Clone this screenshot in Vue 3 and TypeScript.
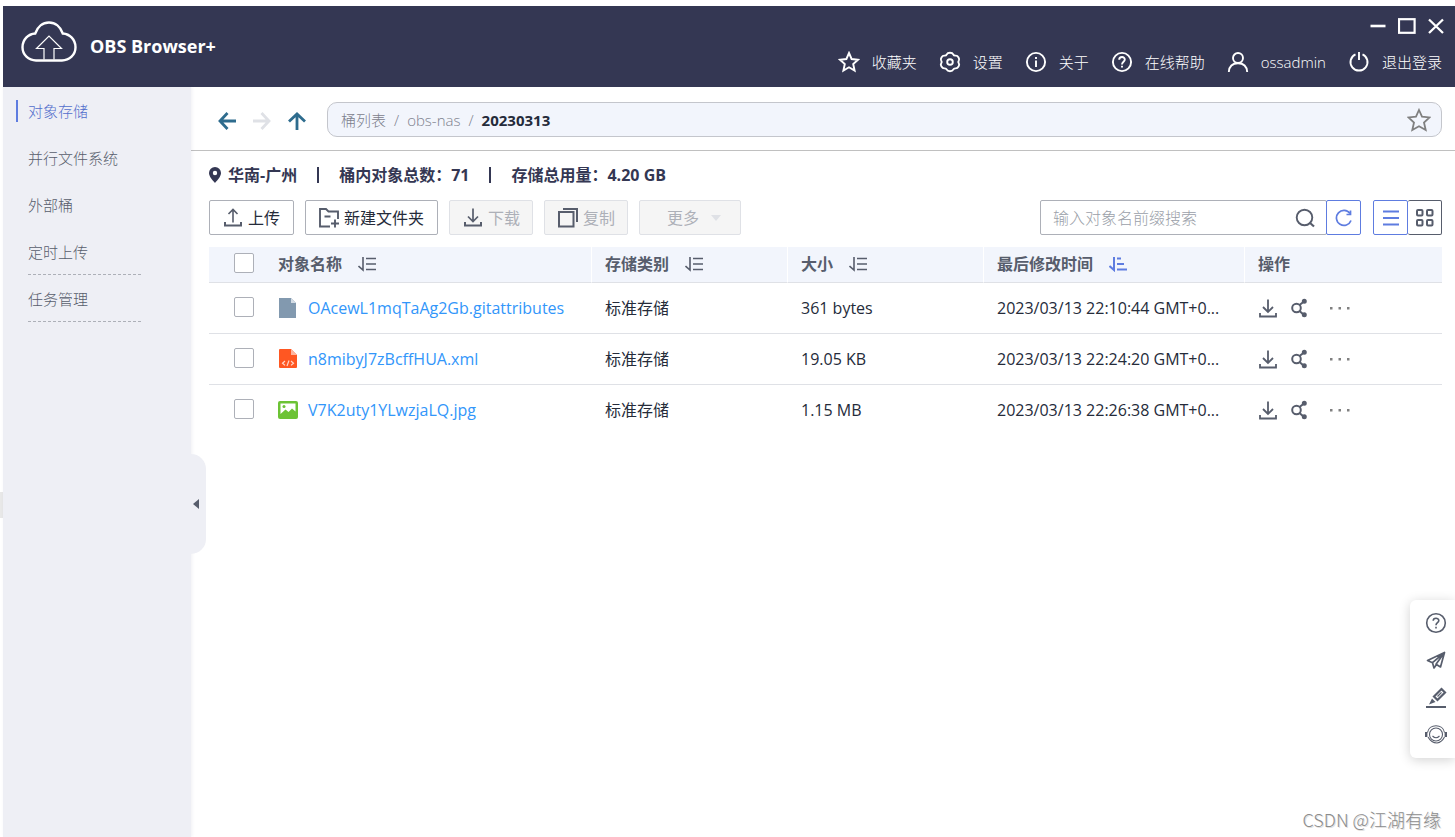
<script setup lang="ts">
import { ref } from 'vue'

interface StoredObject {
  name: string
  kind: 'file' | 'xml' | 'image'
  storageClass: string
  size: string
  modified: string
}

const headerLinks = [
  { icon: 'star', label: '收藏夹' },
  { icon: 'gear', label: '设置' },
  { icon: 'info', label: '关于' },
  { icon: 'help', label: '在线帮助' },
  { icon: 'user', label: 'ossadmin' },
  { icon: 'power', label: '退出登录' },
]

const menu = [
  { label: '对象存储', active: true, divided: false },
  { label: '并行文件系统', active: false, divided: false },
  { label: '外部桶', active: false, divided: false },
  { label: '定时上传', active: false, divided: true },
  { label: '任务管理', active: false, divided: true },
]

const columns = [
  { label: '对象名称', sortable: true, sorted: false },
  { label: '存储类别', sortable: true, sorted: false },
  { label: '大小', sortable: true, sorted: false },
  { label: '最后修改时间', sortable: true, sorted: true },
  { label: '操作', sortable: false, sorted: false },
]

const objects: StoredObject[] = [
  { name: 'OAcewL1mqTaAg2Gb.gitattributes', kind: 'file', storageClass: '标准存储', size: '361 bytes', modified: '2023/03/13 22:10:44 GMT+0...' },
  { name: 'n8mibyJ7zBcffHUA.xml', kind: 'xml', storageClass: '标准存储', size: '19.05 KB', modified: '2023/03/13 22:24:20 GMT+0...' },
  { name: 'V7K2uty1YLwzjaLQ.jpg', kind: 'image', storageClass: '标准存储', size: '1.15 MB', modified: '2023/03/13 22:26:38 GMT+0...' },
]

const keyword = ref('')
const selected = ref<string[]>([])
</script>

<template>
  <div class="app">
    <header class="header">
      <div class="brand">
        <svg class="logo" viewBox="0 0 56 42" width="56" height="42" fill="none" stroke="#fff">
          <path d="M15 39.500C7.500 39.500 1.500 33.800 1.500 26.300C1.500 18.600 7.200 13 14.200 12.500C16.500 5.800 21.800 1.500 28 1.500C34.200 1.500 39.500 5.800 41.800 12.500C48.800 13 54.500 18.600 54.500 26.300C54.500 33.800 48.500 39.500 41 39.500Z" stroke-width="2.400" />
          <path d="M23 38.500V27.500H15.500L28 15L40.500 27.500H33V38.500" stroke-width="1.200" />
        </svg>
        <span class="brand-name">OBS Browser+</span>
      </div>
      <div class="header-right">
        <div class="window-controls">
          <button type="button" aria-label="最小化">
            <svg viewBox="0 0 18 18" width="18" height="18" stroke="#fff" stroke-width="2.600"><path d="M1.500 9H16.500" /></svg>
          </button>
          <button type="button" aria-label="最大化">
            <svg viewBox="0 0 18 18" width="18" height="18" fill="none" stroke="#fff" stroke-width="2.200"><rect x="1" y="2.200" width="15.600" height="13.600" /></svg>
          </button>
          <button type="button" aria-label="关闭">
            <svg viewBox="0 0 18 18" width="18" height="18" stroke="#fff" stroke-width="2.300"><path d="M2 2.500L16 16M16 2.500L2 16" /></svg>
          </button>
        </div>
        <nav class="header-links">
          <a v-for="link in headerLinks" :key="link.icon" href="#">
            <svg viewBox="0 0 22 22" width="22" height="22" fill="none" stroke="#fff" stroke-width="1.900">
              <path v-if="link.icon === 'star'" d="M11 2L13.600 8L20 8.700L15.200 13L16.600 19.600L11 16.300L5.400 19.600L6.800 13L2 8.700L8.400 8Z" />
              <template v-else-if="link.icon === 'gear'">
                <path d="M7.800 3.300C8.700 1.300 13.300 1.300 14.200 3.300C14.800 4.600 15.500 4.800 16.700 4.600C18.900 4.400 21 8 19.800 9.600C19 10.600 19 11.400 19.800 12.400C21 14 18.900 17.600 16.700 17.400C15.500 17.200 14.800 17.400 14.200 18.700C13.300 20.700 8.700 20.700 7.800 18.700C7.200 17.400 6.500 17.200 5.300 17.400C3.100 17.600 1 14 2.200 12.400C3 11.400 3 10.600 2.200 9.600C1 8 3.100 4.400 5.300 4.600C6.500 4.800 7.200 4.600 7.800 3.300Z" />
                <circle cx="11" cy="11" r="2.800" />
              </template>
              <template v-else-if="link.icon === 'info'">
                <circle cx="11" cy="11" r="9.100" />
                <path d="M11 9.500V16" />
                <path d="M11 6V8" />
              </template>
              <template v-else-if="link.icon === 'help'">
                <circle cx="11" cy="11" r="9.100" />
                <path d="M8.200 8.800C8.200 5 13.900 5.200 13.800 8.600C13.800 10.700 11 10.800 11 13.400M11 14.700V16.600" />
              </template>
              <template v-else-if="link.icon === 'user'">
                <circle cx="11" cy="7" r="5" />
                <path d="M1.800 21C2.200 15.500 5.500 12.300 11 12.300S19.800 15.500 20.200 21" />
              </template>
              <path v-else d="M7.500 3.300A8.500 8.500 0 1 0 14.500 3.300M11 1V9" />
            </svg>
            <span>{{ link.label }}</span>
          </a>
        </nav>
      </div>
    </header>

    <div class="body">
      <aside class="sidebar">
        <ul>
          <li v-for="item in menu" :key="item.label" :class="{ divided: item.divided }">
            <a href="#" :class="{ active: item.active }">{{ item.label }}</a>
          </li>
        </ul>
        <button class="collapse" type="button" aria-label="收起菜单">
          <svg viewBox="0 0 6 10" width="6" height="10" fill="#575d6c"><path d="M6 0V10L0 5Z" /></svg>
        </button>
      </aside>

      <main class="main">
        <div class="navbar">
          <div class="arrows">
            <button type="button" aria-label="后退">
              <svg viewBox="0 0 18 18" width="18" height="18" fill="none" stroke="#2e6c8e" stroke-width="2.800"><path d="M18 9H2M9.500 1L2 9L9.500 17" /></svg>
            </button>
            <button type="button" aria-label="前进" disabled>
              <svg viewBox="0 0 18 18" width="18" height="18" fill="none" stroke="#dfe1e6" stroke-width="2.800"><path d="M0 9H16M8.500 1L16 9L8.500 17" /></svg>
            </button>
            <button type="button" aria-label="上一级">
              <svg viewBox="0 0 18 18" width="18" height="18" fill="none" stroke="#2e6c8e" stroke-width="2.800"><path d="M9 18V2M1 9.500L9 2L17 9.500" /></svg>
            </button>
          </div>
          <div class="path">
            <nav class="crumbs">
              <a href="#">桶列表</a><i>/</i><a href="#">obs-nas</a><i>/</i><b>20230313</b>
            </nav>
            <button type="button" aria-label="收藏">
              <svg viewBox="0 0 24 24" width="24" height="24" fill="none" stroke="#808080" stroke-width="1.800"><path d="M12 2L15 8.700L22.500 9.400L17 14.500L18.700 22L12 18.300L5.300 22L7 14.500L1.500 9.400L9 8.700Z" /></svg>
            </button>
          </div>
        </div>

        <section class="content">
          <div class="stats">
            <svg viewBox="0 0 12 16" width="12" height="16" fill="#343753" fill-rule="evenodd"><path d="M6 0A6 6 0 0 1 12 6C12 9.500 8.500 13 6 16C3.500 13 0 9.500 0 6A6 6 0 0 1 6 0ZM6 3.800A2.200 2.200 0 1 0 6 8.200A2.200 2.200 0 1 0 6 3.800Z" /></svg>
            <span>华南-广州</span>
            <i></i>
            <span>桶内对象总数：71</span>
            <i></i>
            <span>存储总用量：4.20 GB</span>
          </div>

          <div class="toolbar">
            <button class="btn" type="button">
              <svg viewBox="0 0 20 20" width="20" height="20" fill="none" stroke="#575d6c" stroke-width="2"><path d="M2 14V17.500H18V14" /><path d="M10 14.500V1.500M5.500 6L10 1.500L14.500 6" stroke-width="1.600" /></svg>
              <span>上传</span>
            </button>
            <button class="btn" type="button">
              <svg viewBox="0 0 20 20" width="20" height="20" fill="none" stroke="#575d6c" stroke-width="1.900"><path d="M11 18.500H1V1H7L9.500 3.500H19V11M5.500 8.500H11.500M12 15.500H20M16 11.500V19.500" /></svg>
              <span>新建文件夹</span>
            </button>
            <button class="btn" type="button" disabled>
              <svg viewBox="0 0 20 20" width="20" height="20" fill="none" stroke="#575d6c" stroke-width="2"><path d="M2 14V17.500H18V14" /><path d="M10 0.500V13.500M5 8.500L10 13.500L15 8.500" stroke-width="1.700" /></svg>
              <span>下载</span>
            </button>
            <button class="btn" type="button" disabled>
              <svg viewBox="0 0 20 20" width="20" height="20" fill="none" stroke="#575d6c" stroke-width="2"><path d="M1 4H15.500V18.500H1ZM5 1H19V14" /></svg>
              <span>复制</span>
            </button>
            <button class="btn more" type="button" aria-haspopup="menu" disabled>
              <span>更多</span>
              <svg viewBox="0 0 10 6" width="10" height="6" fill="#dfe1e6"><path d="M0 0H10L5 6Z" /></svg>
            </button>

            <form class="search" @submit.prevent>
              <input v-model="keyword" type="text" aria-label="搜索对象" placeholder="输入对象名前缀搜索" />
              <button type="submit" aria-label="搜索">
                <svg viewBox="0 0 20 20" width="20" height="20" fill="none" stroke="#575d6c" stroke-width="1.900"><circle cx="9.500" cy="9.500" r="7.800" /><path d="M14.500 14.500L19 18.500" stroke-width="2.200" /></svg>
              </button>
            </form>
            <button class="square blue refresh" type="button" aria-label="刷新">
              <svg viewBox="0 0 18 18" width="18" height="18" fill="none" stroke="#5e7ce0" stroke-width="1.700"><path d="M15 4.500A7.500 7.500 0 1 0 16 11.500" /><path d="M15.500 1.500V5.500H11.500" /></svg>
            </button>
            <div class="views">
              <button class="square blue" type="button" aria-label="列表视图">
                <svg viewBox="0 0 16 16" width="16" height="16" stroke="#5e7ce0" stroke-width="1.800"><path d="M0 1.500H16M0 8H16M0 14.500H16" /></svg>
              </button>
              <button class="square dark" type="button" aria-label="网格视图">
                <svg viewBox="0 0 18 18" width="18" height="18" fill="none" stroke="#575d6c" stroke-width="2"><rect x="1" y="1" width="5.500" height="5.500" rx="1" /><rect x="11" y="1" width="5.500" height="5.500" rx="1" /><rect x="1" y="11" width="5.500" height="5.500" rx="1" /><rect x="11" y="11" width="5.500" height="5.500" rx="1" /></svg>
              </button>
            </div>
          </div>

          <table class="objects">
            <colgroup>
              <col class="c-check" /><col /><col class="c-mid" /><col class="c-mid" /><col class="c-time" /><col class="c-ops" />
            </colgroup>
            <thead>
              <tr>
                <th class="check"><input type="checkbox" aria-label="全选" /></th>
                <th v-for="col in columns" :key="col.label">
                  <div class="th">
                    <span>{{ col.label }}</span>
                    <button v-if="col.sortable" type="button" :aria-label="col.label + ' 排序'">
                      <svg v-if="col.sorted" viewBox="0 0 18 16" width="18" height="16" fill="none" stroke="#5e7ce0" stroke-width="2"><path d="M5 1V14L0.500 10" /><path d="M8 2.500H12M8 8H15M8 13.500H18" /></svg>
                      <svg v-else viewBox="0 0 18 16" width="18" height="16" fill="none" stroke="#575d6c" stroke-width="1.600"><path d="M5 1V14L0.500 10" /><path d="M8 2.500H18M8 8H18M8 13.500H18" /></svg>
                    </button>
                  </div>
                </th>
              </tr>
            </thead>
            <tbody>
              <tr v-for="obj in objects" :key="obj.name">
                <td class="check"><input v-model="selected" type="checkbox" :value="obj.name" :aria-label="obj.name" /></td>
                <td>
                  <a class="name" href="#">
                    <svg v-if="obj.kind === 'file'" viewBox="0 0 20 20" width="20" height="20"><path d="M1 0H13L18 5V20H1Z" fill="#8299af" /><path d="M13 0V5H18Z" fill="#d3dce5" /></svg>
                    <svg v-else-if="obj.kind === 'xml'" viewBox="0 0 20 20" width="20" height="20"><path d="M2 0H13L19 6V18Q19 19 18 19H2Q1 19 1 18V1Q1 0 2 0Z" fill="#ff5722" /><path d="M13 0V6H19Z" fill="#ffb59e" /><path d="M7 12L4.500 14.200L7 16.400M13 12L15.500 14.200L13 16.400M11 11.500L9 17" fill="none" stroke="#ffd5c8" stroke-width="1.200" /></svg>
                    <svg v-else viewBox="0 0 20 20" width="20" height="20"><rect y="1" width="20" height="18" rx="2" fill="#6cc335" /><path d="M2.500 3.500H17.500V11.500L14 8.500L10.500 12L7.500 9.500L2.500 14Z" fill="#fff" /><circle cx="6" cy="6.500" r="1.500" fill="#6cc335" /></svg>
                    <span>{{ obj.name }}</span>
                  </a>
                </td>
                <td>{{ obj.storageClass }}</td>
                <td>{{ obj.size }}</td>
                <td>{{ obj.modified }}</td>
                <td>
                  <div class="ops">
                    <button type="button" aria-label="下载">
                      <svg viewBox="0 0 20 20" width="20" height="20" fill="none" stroke="#575d6c" stroke-width="1.800"><path d="M2 15V18.500H18V15" /><path d="M10 1.500V14M5 9L10 14L15 9" /></svg>
                    </button>
                    <button type="button" aria-label="分享">
                      <svg viewBox="0 0 20 20" width="20" height="20" fill="none" stroke="#575d6c" stroke-width="2"><circle cx="6.500" cy="10" r="4.300" /><path d="M9.500 7L14 3.500M9.500 13L14 17" /><circle cx="14.300" cy="3.300" r="1.500" fill="#575d6c" /><circle cx="14.300" cy="16.800" r="1.500" fill="#575d6c" /></svg>
                    </button>
                    <button type="button" aria-label="更多操作">
                      <svg viewBox="0 0 22 20" width="22" height="20" fill="#808080"><path d="M1 9H3.500V11.500H1ZM9.500 9H12V11.500H9.500ZM18 9H20.500V11.500H18Z" /></svg>
                    </button>
                  </div>
                </td>
              </tr>
            </tbody>
          </table>
        </section>
      </main>
    </div>

    <div class="float">
      <button type="button" aria-label="帮助">
        <svg viewBox="0 0 22 22" width="22" height="22" fill="none" stroke="#575d6c" stroke-width="1.600"><circle cx="11" cy="11" r="9.300" /><path d="M8.200 8.800C8.200 5.400 13.800 5.500 13.800 8.600C13.800 10.700 11 10.800 11 13.200M11 14.700V16.400" /></svg>
      </button>
      <button type="button" aria-label="发送">
        <svg viewBox="0 0 22 22" width="22" height="22" fill="none" stroke="#575d6c" stroke-width="1.700" stroke-linejoin="round"><path d="M19.500 3.500L2.500 11.500L7.500 13.700L19.500 3.500L15.500 18L11 15.200L19.500 3.500M7.500 13.700L9 19L11.500 15.500" /></svg>
      </button>
      <button type="button" aria-label="反馈">
        <svg viewBox="0 0 22 22" width="22" height="22"><path d="M1 21H21" stroke="#575d6c" stroke-width="2" /><path d="M9 10.500L16.500 3L20 6.500L12.500 14Z" fill="none" stroke="#575d6c" stroke-width="2.200" /><path d="M12.500 10.500L16.500 6.300" stroke="#575d6c" stroke-width="1.200" /><path d="M7 12.500L10.500 16L4 18.500Z" fill="#575d6c" /></svg>
      </button>
      <button type="button" aria-label="客服">
        <svg viewBox="0 0 22 22" width="22" height="22" fill="none" stroke="#575d6c" stroke-width="1.100"><circle cx="11" cy="11.500" r="6.500" /><path d="M2.500 9.500C4 0.500 18 0.500 19.500 9.500M3 14C5.500 18.500 8.500 20 12 20C15.500 19.500 18 17 19.500 14M7.500 13Q11 16.500 14.500 13" /><path d="M1.200 9V14M20.800 9V14" stroke-width="2.400" /></svg>
      </button>
    </div>
    <div class="watermark">CSDN @江湖有缘</div>
  </div>
</template>

<style>
body {
  margin: 0;
  background: #fff;
}
</style>

<style scoped>
.app {
  box-sizing: border-box;
  position: relative;
  display: flex;
  flex-direction: column;
  min-height: 100vh;
  padding: 6px 0 0 3px;
  background: linear-gradient(#e8e8e8, #e8e8e8) 0 492px / 3px 26px no-repeat #fff;
  font-family: "Open Sans", "Noto Sans CJK SC", sans-serif;
  font-size: 16px;
  line-height: 24px;
  color: #252b3a;
}
button {
  padding: 0;
  border: 0;
  background: none;
  font: inherit;
  color: inherit;
}
a {
  color: inherit;
  text-decoration: none;
}
svg {
  display: block;
  flex: none;
}
.header {
  box-sizing: border-box;
  display: flex;
  justify-content: space-between;
  height: 81px;
  padding: 11px 10px 0 18px;
  background: #343753;
  color: #fff;
}
.brand {
  display: flex;
  align-items: center;
  gap: 13px;
  height: 50px;
}
.brand-name {
  padding-top: 8px;
  font-size: 18px;
  font-weight: 700;
}
.header-right {
  display: flex;
  flex-direction: column;
  align-items: flex-end;
  gap: 15px;
}
.window-controls {
  display: flex;
  gap: 11px;
}
.header-links {
  display: flex;
  gap: 22px;
  padding-right: 3px;
  font-size: 15px;
  font-weight: 300;
}
.header-links a {
  display: flex;
  align-items: center;
  gap: 12px;
}
.body {
  flex: 1;
  display: flex;
  background: #fff;
}
.sidebar {
  position: relative;
  flex: none;
  width: 188px;
  background: #eeeff5;
  box-shadow: 1px 0 3px rgba(60, 70, 110, 0.08);
  font-size: 15px;
  font-weight: 300;
  color: #575d6c;
}
.sidebar ul {
  margin: 0;
  padding: 0;
  list-style: none;
}
.sidebar li {
  display: flex;
  align-items: center;
  height: 47px;
}
.sidebar li a {
  box-sizing: border-box;
  width: 125px;
  margin-left: 13px;
  padding-left: 10px;
  border-left: 2px solid transparent;
  line-height: 22px;
}
.sidebar li a.active {
  border-left-color: #5e7ce0;
  color: #526ecc;
}
.sidebar li.divided {
  box-sizing: border-box;
  width: 113px;
  margin-left: 25px;
  padding-top: 2px;
  border-bottom: 1px dashed #adb0b8;
}
.sidebar li.divided a {
  margin-left: 0;
  padding-left: 0;
  border-left: 0;
}
.collapse {
  position: absolute;
  top: 367px;
  left: 188px;
  display: flex;
  align-items: center;
  width: 15px;
  height: 100px;
  padding-left: 2px;
  border-radius: 0 15px 15px 0;
  background: #eeeff5;
}
.main {
  flex: 1;
  min-width: 0;
}
.navbar {
  display: flex;
  align-items: center;
  gap: 21px;
  height: 63px;
  padding: 0 13px 0 27px;
  border-bottom: 1px solid #c0c0c0;
}
.arrows {
  display: flex;
  gap: 17px;
  padding-top: 4px;
}
.path {
  box-sizing: border-box;
  flex: 1;
  display: flex;
  align-items: center;
  justify-content: space-between;
  height: 35px;
  margin-top: 2px;
  padding: 0 10px 0 13px;
  border: 1px solid #c4c6cc;
  border-radius: 10px;
  background: #f2f5fc;
}
.crumbs {
  font-size: 15px;
  font-weight: 300;
  color: #7c808c;
}
.crumbs i {
  margin: 0 8px;
  font-style: normal;
}
.crumbs b {
  font-weight: 700;
  color: #252b3a;
}
.content {
  padding: 12px 13px 0 18px;
}
.stats {
  display: flex;
  align-items: center;
  gap: 7px;
  font-weight: 700;
  color: #343753;
}
.stats i {
  width: 2px;
  height: 16px;
  margin: 0 13px;
  background: #343753;
}
.toolbar {
  display: flex;
  align-items: center;
  gap: 11px;
  margin-top: 13px;
}
.btn {
  box-sizing: border-box;
  flex: none;
  display: flex;
  align-items: center;
  gap: 5px;
  height: 35px;
  padding: 0 13px;
  border: 1px solid #adb0b8;
  border-radius: 2px;
  background: #fff;
  white-space: nowrap;
}
.btn:disabled {
  border-color: #dfe1e6;
  background: #f5f5f5;
  color: #adb0b8;
  padding: 0 12px 0 13px;
}
.btn.more {
  gap: 12px;
  padding: 0 19px 0 27px;
}
.search {
  box-sizing: border-box;
  display: flex;
  align-items: center;
  width: 287px;
  height: 35px;
  margin-left: auto;
  padding: 0 11px 0 12px;
  border: 1px solid #adb0b8;
  border-radius: 2px;
}
.search input {
  flex: 1;
  min-width: 0;
  padding: 0;
  border: 0;
  outline: 0;
  font: inherit;
  font-weight: 300;
}
.search input::placeholder {
  color: #9b9fa9;
}
.square {
  box-sizing: border-box;
  display: flex;
  align-items: center;
  justify-content: center;
  width: 35px;
  height: 35px;
  border: 1px solid #575d6c;
  border-radius: 2px;
}
.square.blue {
  border-color: #5e7ce0;
}
.refresh {
  margin-left: -12px;
}
.views {
  display: flex;
  margin-left: 1px;
}
.square.dark {
  width: 34px;
  border-left: 0;
}
.objects {
  width: 100%;
  margin-top: 12px;
  border-collapse: separate;
  border-spacing: 0;
  table-layout: fixed;
}
.c-check { width: 56px; }
.c-mid { width: 196px; }
.c-time { width: 261px; }
.c-ops { width: 198px; }
.objects th,
.objects td {
  box-sizing: border-box;
  padding: 0 0 0 13px;
  border-bottom: 1px solid #dfe1e6;
  text-align: left;
  white-space: nowrap;
  overflow: hidden;
}
.objects th {
  height: 36px;
  padding-bottom: 2px;
  background: #f2f5fc;
  color: #575d6c;
  font-weight: 700;
}
.objects th + th + th {
  border-left: 1px solid #fff;
}
.objects td {
  height: 51px;
}
.objects td + td + td {
  padding-left: 14px;
}
.objects tbody tr:last-child td {
  border-bottom-color: transparent;
}
.objects .check {
  padding-bottom: 3px;
  padding-left: 25px;
}
.check input {
  appearance: none;
  display: block;
  width: 20px;
  height: 20px;
  margin: 0;
  border: 1px solid #adb0b8;
  border-radius: 2px;
  background: #fff;
}
.th {
  display: flex;
  align-items: center;
  gap: 16px;
}
.name {
  display: flex;
  align-items: center;
  gap: 10px;
  color: #3296fa;
}
.ops {
  display: flex;
  gap: 12px;
}
.ops button:last-child {
  margin-left: 7px;
}
.float {
  position: absolute;
  right: 0;
  bottom: 79px;
  box-sizing: border-box;
  display: flex;
  flex-direction: column;
  gap: 15px;
  width: 45px;
  padding: 12px 8px 13px 15px;
  border-radius: 6px 0 0 6px;
  background: #fff;
  box-shadow: 0 2px 12px rgba(0, 0, 0, 0.18);
}
.watermark {
  position: absolute;
  right: 14px;
  bottom: 6px;
  font-size: 18px;
  font-weight: 300;
  color: #8c8c8c;
  font-family: "Noto Sans CJK SC", sans-serif;
  text-shadow: 1px 1px 0 #e0e0e0;
}
</style>
